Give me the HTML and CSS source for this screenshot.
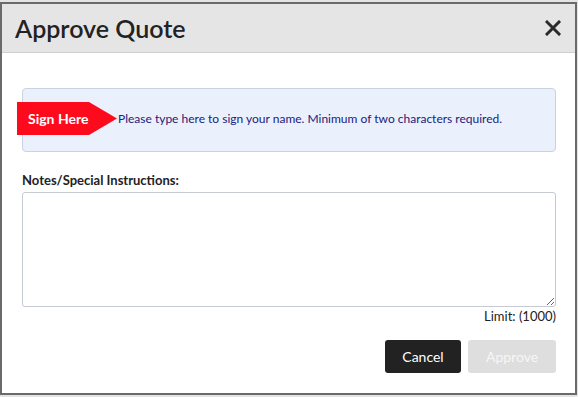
FILE: index.html
```html
<!DOCTYPE html>
<html lang="en">
<head>
    <meta charset="UTF-8">
    <meta name="viewport" content="width=device-width, initial-scale=1.0">
    <title>Approve Quote</title>
    <link rel="stylesheet" href="styles.css">
</head>
<body>
    <div class="modal">
        <div class="modal-header">
            <h1>Approve Quote</h1>
            <button class="close" aria-label="Close">
                <svg width="16" height="16" viewBox="0 0 16 16">
                    <path d="M2 2 L14 14 M14 2 L2 14" stroke="#2b2b2b" stroke-width="3" stroke-linecap="square"/>
                </svg>
            </button>
        </div>

        <div class="modal-body">
            <div class="sign-box">
                <span class="sign-tag">Sign Here</span>
                <span class="sign-text">Please type here to sign your name. Minimum of two characters required.</span>
            </div>

            <label class="notes-label" for="notes">Notes/Special Instructions:</label>
            <textarea id="notes" class="notes"></textarea>
            <div class="limit">Limit: (1000)</div>

            <div class="actions">
                <button class="button cancel">Cancel</button>
                <button class="button approve" disabled>Approve</button>
            </div>
        </div>
    </div>
</body>
</html>
```

FILE: styles.css
```css
body {
    margin: 0;
    padding-top: 2px;
    background: #e4e4e4;
    font-family: Lato, "Noto Sans", sans-serif;
    color: #222;
}
.modal {
    width: 573px;
    height: 389px;
    border: 2px solid #6a6a6a;
    background: #fff;
    display: flex;
    flex-direction: column;
}
.modal-header {
    height: 48px;
    background: #e6e5e5;
    border-bottom: 1px solid #cfcfcf;
    display: flex;
    align-items: center;
    justify-content: space-between;
    padding: 0 14px 0 13px;
}
.modal-header h1 {
    margin: 0;
    font-size: 25px;
    font-weight: 600;
    color: #222;
}
.close {
    border: none;
    background: none;
    padding: 0;
    display: flex;
    cursor: pointer;
}
.modal-body {
    padding: 35px 19px 0 20px;
    display: flex;
    flex-direction: column;
}
.sign-box {
    height: 62px;
    background: #eaf1fd;
    border: 1px solid #c9d2df;
    border-radius: 4px;
    display: flex;
    align-items: flex-start;
}
.sign-tag {
    margin: 13px 0 0 -6px;
    width: 100px;
    height: 33px;
    padding-left: 11px;
    box-sizing: border-box;
    background: #fe0a1d;
    color: #fff;
    font-weight: bold;
    font-size: 14px;
    line-height: 33px;
    clip-path: polygon(0 0, 72% 0, 100% 50%, 72% 100%, 0 100%);
}
.sign-text {
    margin: 23px 0 0 1px;
    font-size: 12px;
    line-height: 14px;
    color: #23207a;
}
.notes-label {
    margin-top: 20px;
    font-size: 13px;
    font-weight: bold;
    color: #222;
}
.notes {
    margin-top: 4px;
    height: 115px;
    box-sizing: border-box;
    border: 1px solid #c5cad3;
    border-radius: 3px;
    resize: vertical;
    font-family: inherit;
}
.limit {
    margin-top: 1px;
    text-align: right;
    font-size: 13px;
    color: #222;
}
.actions {
    margin-top: 16px;
    display: flex;
    justify-content: flex-end;
    gap: 7px;
}
.button {
    height: 33px;
    border: none;
    border-radius: 3px;
    font-family: inherit;
    font-size: 14px;
}
.cancel {
    width: 76px;
    background: #222;
    color: #fff;
}
.approve {
    width: 88px;
    background: #dedede;
    color: #f6f6f6;
}
```
